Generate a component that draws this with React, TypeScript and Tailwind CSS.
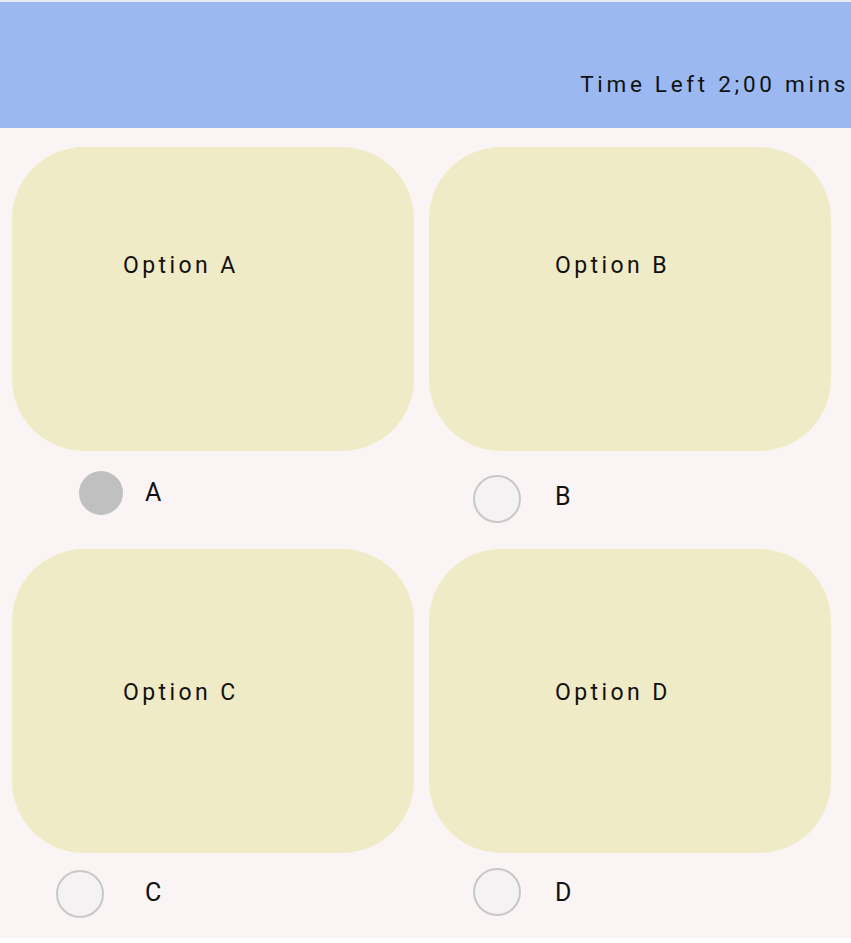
import React from "react";

const font = { fontFamily: "Roboto, 'Noto Sans', sans-serif" };

function Card({ label, padL, padT }: { label: string; padL: string; padT: string }) {
  return (
    <div className={`h-[304px] w-[402px] rounded-[72px] bg-[#f0ebc7] ${padL} ${padT}`}>
      <span className="text-[23px] leading-[24px] tracking-[3.4px] text-[#111]">{label}</span>
    </div>
  );
}

function Radio({ filled }: { filled?: boolean }) {
  return filled ? (
    <div className="h-[44px] w-[44px] rounded-full bg-[#c0c0c0]" />
  ) : (
    <div className="h-[48px] w-[48px] rounded-full border-2 border-[#c9c7c8] bg-[#f5f2f3]" />
  );
}

export default function App() {
  return (
    <div style={font} className="w-[851px] bg-white">
      <div className="flex h-[938px] flex-col bg-[#faf4f4]">
        <div className="h-[2px] bg-[#e6ecf8]" />
        <div className="flex h-[126px] items-start justify-end bg-[#9bb9f0] pr-[2px] pt-[70px]">
          <span className="text-[22.5px] leading-[24px] tracking-[3.7px] text-[#111]">Time Left 2;00 mins</span>
        </div>
        <div className="flex gap-[15px] pl-[12px] pt-[19px]">
          <div className="flex flex-col">
            <Card label="Option A" padL="pl-[111px]" padT="pt-[107px]" />
            <div className="flex items-center pl-[67px] pt-[20px]">
              <Radio filled />
              <span className="ml-[22px] text-[25px] leading-[24px] text-[#111]">A</span>
            </div>
          </div>
          <div className="flex flex-col">
            <Card label="Option B" padL="pl-[126px]" padT="pt-[107px]" />
            <div className="flex items-center pl-[44px] pt-[24px]">
              <Radio />
              <span className="ml-[34px] mb-[4px] text-[25px] leading-[24px] text-[#111]">B</span>
            </div>
          </div>
        </div>
        <div className="flex gap-[15px] pl-[12px] pt-[26px]">
          <div className="flex flex-col">
            <Card label="Option C" padL="pl-[111px]" padT="pt-[132px]" />
            <div className="flex items-center pl-[44px] pt-[17px]">
              <Radio />
              <span className="ml-[41px] mb-[2px] text-[25px] leading-[24px] text-[#111]">C</span>
            </div>
          </div>
          <div className="flex flex-col">
            <Card label="Option D" padL="pl-[126px]" padT="pt-[132px]" />
            <div className="flex items-center pl-[44px] pt-[15px]">
              <Radio />
              <span className="ml-[34px] mt-[2px] text-[25px] leading-[24px] text-[#111]">D</span>
            </div>
          </div>
        </div>
      </div>
    </div>
  );
}
